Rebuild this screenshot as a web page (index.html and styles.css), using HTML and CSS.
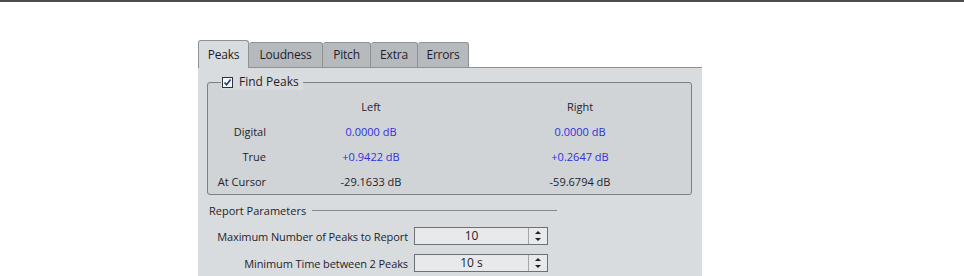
FILE: index.html
```html
<!DOCTYPE html>
<html lang="en">
<head>
    <meta charset="UTF-8">
    <title>Peaks</title>
    <link rel="stylesheet" href="styles.css">
</head>
<body>
    <div class="topline"></div>

    <div class="dialog">
        <ul class="tabs">
            <li class="tab tab-peaks active">Peaks</li>
            <li class="tab tab-loudness">Loudness</li>
            <li class="tab tab-pitch">Pitch</li>
            <li class="tab tab-extra">Extra</li>
            <li class="tab tab-errors">Errors</li>
        </ul>

        <div class="page">
            <fieldset class="group">
                <legend class="group-title">
                    <span class="check">
                        <svg width="9" height="9" viewBox="0 0 9 9"><path d="M1.5 4.5 L3.6 6.8 L7.6 1.6" fill="none" stroke="#1f3b8a" stroke-width="1.6"/></svg>
                    </span>
                    Find Peaks
                </legend>
                <div class="peaks">
                    <span></span>
                    <span class="head">Left</span>
                    <span class="head">Right</span>

                    <span class="label">Digital</span>
                    <span class="value blue">0.0000 dB</span>
                    <span class="value blue">0.0000 dB</span>

                    <span class="label">True</span>
                    <span class="value blue">+0.9422 dB</span>
                    <span class="value blue">+0.2647 dB</span>

                    <span class="label">At Cursor</span>
                    <span class="value">-29.1633 dB</span>
                    <span class="value">-59.6794 dB</span>
                </div>
            </fieldset>

            <div class="section-title">
                <span>Report Parameters</span>
                <span class="rule"></span>
            </div>

            <div class="params">
                <label class="param-label">Maximum Number of Peaks to Report</label>
                <div class="spin">
                    <span class="spin-value">10</span>
                    <span class="spin-buttons"><span class="up"></span><span class="down"></span></span>
                </div>

                <label class="param-label">Minimum Time between 2 Peaks</label>
                <div class="spin">
                    <span class="spin-value">10 s</span>
                    <span class="spin-buttons"><span class="up"></span><span class="down"></span></span>
                </div>
            </div>
        </div>
    </div>
</body>
</html>
```

FILE: styles.css
```css
body {
    background-color: #fff;
    color: #1e1e2c;
    font-family: "Open Sans", "Noto Sans", sans-serif;
    font-size: 11px;
    margin: 0;
    padding: 0;
}

.topline {
    height: 2px;
    background-color: #4d4d4d;
}

.dialog {
    margin: 38px 0 0 198px;
    width: 504px;
}

/* tabs */
.tabs {
    list-style-type: none;
    margin: 0;
    padding: 0;
    display: flex;
    align-items: flex-end;
    height: 27px;
}

.tab {
    box-sizing: border-box;
    height: 25px;
    text-align: center;
    line-height: 24px;
    font-size: 12px;
    letter-spacing: -0.2px;
    background-color: #b7babd;
    border: 1px solid #8e9195;
    border-bottom: none;
    border-left: none;
    border-radius: 3px 3px 0 0;
}

.tab.active {
    height: 28px;
    margin-bottom: -1px;
    line-height: 28px;
    background-color: #d9dcdf;
    border-left: 1px solid #8e9195;
    position: relative;
    z-index: 1;
}

.tab-peaks { width: 51px; }
.tab-loudness { width: 74px; }
.tab-pitch { width: 48px; }
.tab-extra { width: 47px; }
.tab-errors { width: 51px; }

.page {
    background-color: #d9dcdf;
    border-top: 1px solid #8e9195;
    padding: 6px 10px 4px 9px;
    height: 208px;
}

/* find peaks group */
.group {
    margin: 0;
    padding: 0;
    border: 1px solid #7b7f87;
    border-radius: 3px;
    background-color: #d0d4d7;
}

.group-title {
    display: flex;
    align-items: center;
    gap: 6px;
    margin-left: 13px;
    padding: 0 4px 0 1px;
    background-color: #d9dcdf;
    font-size: 12px;
    line-height: 16px;
}

.check {
    width: 9px;
    height: 9px;
    border: 1px solid #30343a;
    background-color: #f4f6f8;
    display: flex;
}

.peaks {
    display: grid;
    grid-template-columns: 58px 210px 208px;
    grid-auto-rows: 25px;
    align-items: center;
    padding-top: 4px;
}

.head,
.value {
    text-align: center;
}

.label {
    text-align: right;
}

.blue {
    color: #2f2fe0;
}

/* report parameters */
.section-title {
    display: flex;
    align-items: center;
    gap: 6px;
    width: 348px;
    margin-top: 8px;
    padding-left: 2px;
}

.rule {
    flex: 1;
    border-top: 1px solid #868a90;
}

.params {
    display: grid;
    grid-template-columns: 201px 134px;
    column-gap: 6px;
    row-gap: 9px;
    align-items: center;
    margin-top: 9px;
}

.param-label {
    text-align: right;
    white-space: nowrap;
    font-size: 11px;
    letter-spacing: -0.1px;
}

.spin {
    box-sizing: border-box;
    height: 18px;
    display: flex;
    border: 1px solid #6d7075;
    background-color: #e7e9eb;
}

.spin-value {
    flex: 1;
    text-align: center;
    line-height: 16px;
    font-size: 12px;
}

.spin-buttons {
    width: 18px;
    border-left: 1px solid #a4a7ab;
    display: flex;
    flex-direction: column;
    align-items: center;
    justify-content: center;
    gap: 4px;
}

.up,
.down {
    width: 0;
    height: 0;
    border-left: 3px solid transparent;
    border-right: 3px solid transparent;
}

.up {
    border-bottom: 3px solid #222;
}

.down {
    border-top: 3px solid #222;
}
```
